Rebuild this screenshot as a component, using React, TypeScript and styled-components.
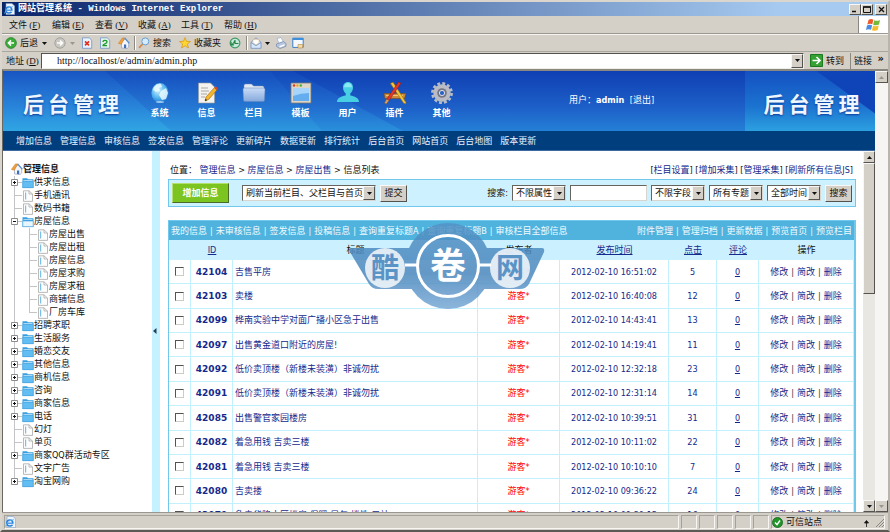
import React from "react";
import styled, { createGlobalStyle, css } from "styled-components";

const sans = `"DejaVu Sans Condensed", "DejaVu Sans", "Noto Sans CJK SC", sans-serif`;
const menuFont = `"Liberation Serif", "Noto Sans CJK SC", serif`;
const navy = "#14298c";
const face = "#d4d0c8";

const Global = createGlobalStyle`
  * { box-sizing: border-box; }
  html, body { margin: 0; height: 100%; overflow: hidden; }
  #root { height: 100%; }
  body { font: 9px/12px ${sans}; color: #111; background: ${face}; }
  button, input, select { font: inherit; color: inherit; margin: 0; padding: 0; border-radius: 0; }
  a { color: inherit; text-decoration: none; }
  svg { display: block; flex: none; }
`;

const raised = css`
  background: ${face};
  border: 1px solid;
  border-color: #f8f7f4 #55534f #55534f #f8f7f4;
`;

const Window = styled.div`
  height: 100vh;
  display: flex;
  flex-direction: column;
  border: 2px solid #dad6ce;
  border-right-color: #b9b5ad;
  border-bottom-color: #5c5a55;
`;
const TitleBar = styled.header`
  height: 14px;
  flex: none;
  display: flex;
  align-items: center;
  gap: 3px;
  padding: 0 1px 0 2px;
  color: #fff;
  background: linear-gradient(90deg, #0a246a, #a6caf0 88%);
  h1 {
    flex: 1;
    margin: 0;
    font: bold 9px/14px "Liberation Mono", "Noto Sans CJK SC", monospace;
  }
`;
const CaptionButtons = styled.div`
  display: flex;
`;
const CaptionButton = styled.button<{ $apart?: boolean }>`
  ${raised}
  width: 12px;
  height: 11px;
  margin-left: ${(p) => (p.$apart ? 2 : 0)}px;
  display: grid;
  place-items: center;
`;
const MenuBar = styled.nav`
  height: 18px;
  flex: none;
  display: flex;
  align-items: stretch;
  padding-left: 7px;
  border-bottom: 1px solid #9b9891;
  font: 9px/18px ${menuFont};
`;
const MenuItem = styled.button`
  width: 43px;
  border: 0;
  background: none;
  text-align: left;
  white-space: nowrap;
`;
const Flag = styled.div`
  width: 30px;
  margin-left: auto;
  display: grid;
  place-items: center;
  background: #fff;
  border-left: 1px solid #8a8780;
`;
const ToolBar = styled.div`
  height: 18px;
  flex: none;
  display: flex;
  align-items: center;
  padding-left: 3px;
  border-top: 1px solid #f6f4f0;
  border-bottom: 1px solid #aaa79f;
`;
const ToolButton = styled.button<{ $w: number }>`
  width: ${(p) => p.$w}px;
  height: 16px;
  border: 0;
  background: none;
  display: flex;
  align-items: center;
  gap: 3px;
  white-space: nowrap;
`;
const Divider = styled.span`
  width: 2px;
  height: 14px;
  margin-right: 2px;
  border-left: 1px solid #8c8982;
  border-right: 1px solid #fff;
`;
const AddressBar = styled.form`
  height: 17px;
  flex: none;
  display: flex;
  align-items: center;
  padding-left: 4px;
  label { width: 35px; font: 9px/16px ${menuFont}; }
`;
const AddressField = styled.div`
  flex: 1;
  height: 16px;
  display: flex;
  background: #fff;
  border: 1px solid;
  border-color: #55534f #efede8 #efede8 #55534f;
  input {
    flex: 1;
    min-width: 0;
    border: 0;
    outline: 0;
    padding-left: 15px;
    font: 10px/14px "Liberation Serif", serif;
  }
`;
const ArrowButton = styled.button`
  ${raised}
  width: 12px;
  display: grid;
  place-items: center;
`;
const GoButton = styled.button`
  height: 15px;
  width: 46px;
  padding-left: 6px;
  border: 0;
  background: none;
  display: flex;
  align-items: center;
  gap: 3px;
  white-space: nowrap;
`;
const LinksButton = styled.button`
  width: 38px;
  height: 16px;
  padding: 0 4px 0 3px;
  border: 0;
  border-left: 1px solid #8c8982;
  background: none;
  display: flex;
  justify-content: space-between;
  align-items: center;
  b { align-self: start; font-size: 11px; }
`;

const Viewport = styled.div`
  flex: 1;
  min-height: 0;
  display: flex;
  border-top: 2px solid #8b897f;
  border-left: 1px solid #6b6964;
`;
const Page = styled.div`
  flex: 1;
  min-width: 0;
  display: flex;
  flex-direction: column;
  background: #fff;
`;
const ScrollTrack = styled.div<{ $w: number; $idle?: boolean }>`
  width: ${(p) => p.$w}px;
  flex: none;
  display: flex;
  flex-direction: column;
  background: ${(p) => (p.$idle ? "#f6f5f3" : "#e9e7e2")};
`;
const ScrollButton = styled.button`
  ${raised}
  height: 12px;
  flex: none;
  display: grid;
  place-items: center;
`;
const Thumb = styled.div`
  ${raised}
  height: 131px;
`;
const Spring = styled.div`
  flex: 1;
`;

const Banner = styled.div`
  position: relative;
  height: 60px;
  flex: none;
  display: flex;
  color: #fff;
  background: linear-gradient(#0f3fb3, #1d5fc8 60%, #2480d6);
`;
const Rays = styled.svg`
  position: absolute;
  left: 0;
  top: 0;
`;
const BrandBox = styled.div<{ $panel?: boolean }>`
  position: relative;
  width: ${(p) => (p.$panel ? 130 : 133)}px;
  padding-top: 4px;
  padding-left: 3px;
  display: flex;
  justify-content: center;
  align-items: center;
  gap: 4px;
  font: bold 21px/28px "Noto Sans CJK SC", sans-serif;
  color: #eef7ff;
  text-shadow: 0 1px 2px #0a3c9c;
  background: ${(p) =>
    p.$panel
      ? "linear-gradient(216deg, #0f43b8 27%, transparent 28%), linear-gradient(#1450c2, #1c74d0 60%, #2ca0e0)"
      : "none"};
`;
const Modules = styled.nav`
  position: relative;
  display: flex;
  flex: 1;
`;
const Module = styled.a`
  width: 47px;
  padding-top: 10px;
  display: flex;
  flex-direction: column;
  align-items: center;
  gap: 2px;
  font-weight: bold;
`;
const UserBox = styled.div`
  position: relative;
  width: 176px;
  padding-top: 23px;
  b { margin-right: 3px; }
`;
const SubNav = styled.nav`
  height: 19px;
  flex: none;
  display: flex;
  align-items: center;
  gap: 8px;
  padding-left: 13px;
  color: #e8f2fc;
  background: #003e7e;
  white-space: nowrap;
`;
const Frames = styled.div`
  flex: 1;
  min-height: 0;
  display: flex;
  border-top: 1px solid #3c6aa0;
`;
const Side = styled.aside`
  width: 149px;
  flex: none;
  padding: 11px 0 0 8px;
  overflow: hidden;
`;
const RootNode = styled.div`
  height: 14px;
  display: flex;
  align-items: center;
  font-weight: bold;
`;
const Tree = styled.ul<{ $nested?: boolean }>`
  list-style: none;
  margin: 0;
  padding: 0;
  margin-left: ${(p) => (p.$nested ? 15 : 0)}px;
`;
const Node = styled.li<{ $last?: boolean }>`
  background: linear-gradient(#c4c4c4, #c4c4c4) 3px 0 / 1px ${(p) => (p.$last ? "7px" : "100%")} no-repeat;
`;
const NodeRow = styled.a`
  height: 13px;
  display: flex;
  align-items: center;
  line-height: 13px;
  white-space: nowrap;
`;
const Twig = styled.span`
  width: 11px;
  height: 13px;
  flex: none;
  display: flex;
  align-items: center;
  background: linear-gradient(#c4c4c4, #c4c4c4) 4px 6px / 7px 1px no-repeat;
`;
const Splitter = styled.button`
  width: 8px;
  flex: none;
  border: 0;
  background: #c6f1ff;
  display: flex;
  align-items: center;
`;
const Main = styled.main`
  position: relative;
  flex: 1;
  min-width: 0;
  padding: 13px 7px 0 8px;
  overflow: hidden;
`;
const Crumbs = styled.div`
  height: 15px;
  display: flex;
  justify-content: space-between;
  padding: 0 3px 0 2px;
  white-space: nowrap;
  a { color: ${navy}; }
`;
const Controls = styled.form`
  height: 28px;
  display: flex;
  align-items: center;
  gap: 4px;
  padding: 0 3px;
  background: #cdf1ff;
  border: 1px solid #72c8ec;
  white-space: nowrap;
`;
const AddButton = styled.button`
  width: 57px;
  height: 20px;
  margin-right: 9px;
  color: #fff;
  font-weight: bold;
  background: #7cc41f;
  border: 1px solid;
  border-color: #b4e070 #4a6a2a #4a6a2a #b4e070;
`;
const GreyButton = styled.button`
  ${raised}
  width: 27px;
  height: 17px;
  line-height: 13px;
`;
const SelectBox = styled.span<{ $w: number }>`
  width: ${(p) => p.$w}px;
  height: 16px;
  display: grid;
  background: #fff;
  border: 1px solid;
  border-color: #66645f #d8d5ce #d8d5ce #66645f;
  select {
    grid-area: 1 / 1;
    width: 100%;
    appearance: none;
    border: 0;
    background: none;
    padding: 0 12px 0 3px;
    outline: 0;
  }
`;
const SelectArrow = styled.span`
  ${raised}
  grid-area: 1 / 1;
  justify-self: end;
  width: 12px;
  display: grid;
  place-items: center;
  pointer-events: none;
`;
const SearchLabel = styled.label`
  margin-left: auto;
`;
const SearchInput = styled.input`
  width: 77px;
  height: 16px;
  background: #fff;
  border: 1px solid;
  border-color: #66645f #d8d5ce #d8d5ce #66645f;
`;
const ListBox = styled.section`
  margin-top: 13px;
  border: 1px solid #72c8ec;
  border-width: 1px 2px 1px 1px;
`;
const ListBar = styled.div`
  height: 19px;
  display: flex;
  justify-content: space-between;
  align-items: center;
  padding: 0 2px;
  color: #f2fbff;
  background: #4fb3de;
  white-space: nowrap;
`;
const Sep = styled.span`
  margin: 0 3px;
`;
const Grid = styled.table`
  width: 100%;
  height: 288px;
  table-layout: fixed;
  border-collapse: separate;
  border-spacing: 0;
  color: ${navy};
  th {
    height: 20px;
    padding: 0;
    font-weight: normal;
    background: #cbf0ff;
  }
  th a { text-decoration: underline; }
  td {
    padding: 0;
    text-align: center;
    white-space: nowrap;
    border-bottom: 1px solid #c2f0fc;
    border-right: 1px solid #c2f0fc;
  }
`;
const PlainHead = styled.th`
  color: #111;
`;
const IdCell = styled.td`
  font: bold 9px/12px "DejaVu Sans", sans-serif;
`;
const TitleCell = styled.td`
  && { text-align: left; padding-left: 2px; }
`;
const Guest = styled.td`
  color: #ff0000;
`;
const Ops = styled.td`
  i { font-style: normal; color: #333; margin: 0 3px; }
`;
const Reply = styled.a`
  text-decoration: underline;
`;
const Check = styled.input`
  appearance: none;
  display: block;
  width: 9px;
  height: 9px;
  margin: 0 auto;
  background: #fff;
  border: 1px solid;
  border-color: #55534f #cfccc5 #cfccc5 #55534f;
`;
const Watermark = styled.svg`
  position: absolute;
  left: 186px;
  top: 69px;
  pointer-events: none;
`;
const StatusBar = styled.footer`
  height: 18px;
  flex: none;
  display: flex;
  align-items: stretch;
  padding: 2px 1px 1px 2px;
  border-top: 1px solid #9b9891;
`;
const StatusCell = styled.div<{ $w?: number }>`
  ${(p) => (p.$w ? `width: ${p.$w}px;` : "flex: 1;")}
  margin-right: 2px;
  display: flex;
  align-items: center;
  gap: 3px;
  border: 1px solid;
  border-color: #a5a29b #f8f6f2 #f8f6f2 #a5a29b;
`;
const Grip = styled.span`
  margin-left: auto;
  display: flex;
  align-items: end;
  gap: 6px;
`;

const Tri = ({ up, grey }: { up?: boolean; grey?: boolean }) => (
  <svg width="5" height="3" viewBox="0 0 5 3">
    <path d={up ? "M0 3h5L2.5 0z" : "M0 0h5L2.5 3z"} fill={grey ? "#99968f" : "#111"} />
  </svg>
);

const IeIcon = () => (
  <svg width="11" height="12" viewBox="0 0 11 12">
    <path d="M2 .4h6l2.600 2.600v8.600H2z" fill="#eef4fb" stroke="#7f9cc4" strokeWidth=".6" />
    <circle cx="4.800" cy="7" r="3" fill="none" stroke="#2b83dc" strokeWidth="1.600" />
    <path d="M2.300 7.200h5.300" stroke="#2b83dc" strokeWidth="1.200" />
    <path d="M6.500 8.300h2.300" stroke="#eef4fb" strokeWidth="1" />
    <path d="M.5 10.500Q3 3.500 9 3.600" fill="none" stroke="#6bb6ee" strokeWidth=".8" />
  </svg>
);

const toolArt: Record<string, React.ReactNode> = {
  back: (
    <>
      <circle cx="6" cy="6" r="5.4" fill="#3dab3a" stroke="#1f7d22" strokeWidth=".7" />
      <path d="M9 6H3.6M6 3.4 3.4 6 6 8.6" stroke="#fff" strokeWidth="1.5" fill="none" />
    </>
  ),
  forward: (
    <>
      <circle cx="6" cy="6" r="5.2" fill="#c9c7c2" stroke="#9a9892" strokeWidth=".8" />
      <path d="M3 6h5.4M6 3.4 8.6 6 6 8.6" stroke="#fff" strokeWidth="1.4" fill="none" />
    </>
  ),
  stop: (
    <>
      <path d="M1.5.8h6.7l2.5 2.4v8.1H1.5z" fill="#eaf3fd" stroke="#6e93c8" strokeWidth=".8" />
      <path d="m4 4.4 4 4M8 4.4l-4 4" stroke="#e0301e" strokeWidth="1.6" />
    </>
  ),
  refresh: (
    <>
      <path d="M1.5.8h6.7l2.5 2.4v8.1H1.5z" fill="#e4f3e9" stroke="#6e93c8" strokeWidth=".8" />
      <path d="M4 5q0-1.6 2-1.6T8 5q0 1-2 1.8T4 8.6h4" stroke="#1f9a2c" strokeWidth="1.3" fill="none" />
    </>
  ),
  home: (
    <>
      <path d="M3.500 5.500v5.400l5.500.7 1.700-1.600V5.500L7 2z" fill="#f3f6fb" stroke="#8294b4" strokeWidth=".6" />
      <path d="M.4 6.400 4.400.900h2.200L3.400 7.200z" fill="#f0a03c" stroke="#cf7416" strokeWidth=".5" />
      <path d="m6.600.9 4.700 5.400" stroke="#5a8fd0" strokeWidth="1.300" />
      <path d="M6 7.500h2.200v3.800L6 11z" fill="#3f6fb8" />
    </>
  ),
  search: (
    <>
      <circle cx="7.3" cy="4.4" r="3.5" fill="#d4ecfb" stroke="#6b9fd2" strokeWidth="1" />
      <path d="m4.6 7-3.5 3.9" stroke="#d08a4c" strokeWidth="1.7" />
    </>
  ),
  star: (
    <path
      d="m6 .6 1.5 3.7 4 .2-3.1 2.5 1.1 4L6 8.8 2.5 11l1.1-4L.5 4.5l4-.2z"
      fill="#ffd52e"
      stroke="#d79312"
      strokeWidth=".7"
    />
  ),
  history: (
    <>
      <circle cx="6" cy="6" r="4.9" fill="#c8e8dd" stroke="#3d9a63" strokeWidth="1.1" />
      <path d="M2 4.800v3h3M2.500 7.500Q5 6.500 6 3.500M6 3v3.500h3.500" stroke="#278544" strokeWidth="1.200" fill="none" />
    </>
  ),
  mail: (
    <>
      <path d="M1 5.3 6 .8l5 4.5v6H1z" fill="#d7e7f9" stroke="#6d90c4" strokeWidth=".8" />
      <path d="M3 2.6h6v3.2L6 8 3 5.8z" fill="#fff" stroke="#e1ab72" strokeWidth=".5" />
      <path d="m1 5.5 5 3.2 5-3.2" fill="none" stroke="#6d90c4" strokeWidth=".8" />
    </>
  ),
  print: (
    <>
      <path d="m2 1.500 4-1L8.500 5 4 6.500z" fill="#fff" stroke="#88a3cc" strokeWidth=".6" />
      <path d="m1.500 7 7-2.500 2.500 2v2.800L5 11.500 1.500 9.500z" fill="#b9c6de" stroke="#7387ad" strokeWidth=".7" />
      <path d="m4.500 9 5-1.800v1.500l-5 1.800z" fill="#fff" />
    </>
  ),
  edit: (
    <>
      <path d="M.8 1.2h10.4v9.200H.8z" fill="#f3f9ff" stroke="#3c7fc8" strokeWidth="1" />
      <path d="M.8 1h10.4v2H.8z" fill="#3c8fdc" />
      <path d="M6 7.500h4.500v3.500H6z" fill="#f6d9a2" stroke="#b28a4c" strokeWidth=".6" />
    </>
  ),
};
const ToolIcon = ({ name }: { name: string }) => (
  <svg width="12" height="12" viewBox="0 0 12 12">
    {toolArt[name]}
  </svg>
);

const moduleArt: Record<string, React.ReactNode> = {
  系统: (
    <>
      <defs>
        <radialGradient id="globe" cx=".4" cy=".35" r=".7">
          <stop offset="0" stopColor="#d8f4ff" />
          <stop offset=".55" stopColor="#59b8f0" />
          <stop offset="1" stopColor="#1a6ed0" />
        </radialGradient>
      </defs>
      <ellipse cx="12" cy="12" rx="8.6" ry="10" fill="url(#globe)" />
      <path d="M6 6q3-4 7-3l1 3-3 1 1 3-4 1-3-2zM13 10l5-3 2 5-2 6-4 1-3-5z" fill="#e9faff" opacity=".85" />
      <ellipse cx="12" cy="21" rx="4" ry="1" fill="#dff6ff" opacity=".6" />
    </>
  ),
  信息: (
    <>
      <path d="M3.5 2h12l4 4v16h-16z" fill="#f3f2ef" stroke="#9b9b9b" strokeWidth=".6" />
      <path d="M6 7h7M6 10h8M6 13h6M6 16h4" stroke="#a9a9a9" strokeWidth="1" />
      <path d="m10 20 1-4 8.3-9.3 2.6 2.3-8.2 9.4z" fill="#f3b62c" stroke="#a8630e" strokeWidth=".6" />
      <path d="m19.3 6.7 1.3-1.4 2.5 2.3L21.900 9z" fill="#d9472c" />
      <path d="m10 20 .6-2.300 1.600 1.500z" fill="#222" />
    </>
  ),
  栏目: (
    <>
      <defs>
        <linearGradient id="folder" x2="0" y2="1">
          <stop offset="0" stopColor="#c9dcf7" />
          <stop offset="1" stopColor="#86a9dc" />
        </linearGradient>
      </defs>
      <path d="M2 4.500q0-1.500 1.500-1.500h6l2 2h9q1.500 0 1.500 1.500V12H2z" fill="#e1e9f4" stroke="#6f86b0" strokeWidth=".5" />
      <path d="M1 8.500q0-1.500 1.500-1.500h19q1.500 0 1.500 1.500L22.500 19q0 1.500-1.500 1.500H3Q1.500 20.500 1.500 19z" fill="url(#folder)" stroke="#6484bb" strokeWidth=".5" />
    </>
  ),
  模板: (
    <>
      <path d="M2 2h20v20H2z" fill="#ddd6c8" stroke="#7d776c" strokeWidth=".8" />
      <path d="M4 7h16v13H4z" fill="#64aef0" />
      <path d="M4 7h16v5Q12 12 4 15z" fill="#a6d4fa" />
      <circle cx="5" cy="4.500" r="1.200" fill="#e03a2c" />
      <circle cx="8.400" cy="4.500" r="1.200" fill="#f0a822" />
      <circle cx="11.800" cy="4.500" r="1.200" fill="#48b039" />
    </>
  ),
  用户: (
    <>
      <path d="M12 1c3 0 5 2.300 5 5.500 0 2.500-1 4.500-2.700 5.700v2.300c4 .9 8.700 2.300 8.700 6.500H1c0-4.200 4.700-5.600 8.700-6.500v-2.300C8 11 7 9 7 6.500 7 3.300 9 1 12 1z" fill="#49cfe4" />
      <path d="M12 2c2.300 0 4 1.700 4 4.300H8C8 3.700 9.700 2 12 2z" fill="#8ce8f2" />
    </>
  ),
  插件: (
    <>
      <path d="M1 12.500h22l-1.500 5H2z" fill="#c98a3c" stroke="#7a4a14" strokeWidth=".6" />
      <path d="M3 14.500h17" stroke="#f0c27a" strokeWidth="1" />
      <path d="m7.500 2.500 2.600-1.300L23 21.500l-.5 1.300-1.800-.6z" fill="#f4c63a" stroke="#a46d10" strokeWidth=".6" />
      <path d="m15.500 1 2.500 1.300L6 19.500l-2.300-1.400z" fill="#e2382b" stroke="#8a1a12" strokeWidth=".5" />
      <path d="m3.700 18.100 2.300 1.400-2.600 3.500-2-1z" fill="#d8a060" stroke="#7a4a14" strokeWidth=".4" />
    </>
  ),
  其他: (
    <>
      <circle cx="12" cy="12" r="9.600" fill="none" stroke="#b9bcc4" strokeWidth="2.600" strokeDasharray="2.900 2.127" />
      <circle cx="12" cy="12" r="6.200" fill="none" stroke="#b9bcc4" strokeWidth="5" />
      <circle cx="12" cy="12" r="4.800" fill="#747884" />
      <circle cx="12" cy="12" r="2.600" fill="#2a63c6" stroke="#dcdfe6" strokeWidth="1" />
    </>
  ),
};

const FolderIcon = ({ open }: { open?: boolean }) => (
  <svg width="12" height="12" viewBox="0 0 12 12">
    <path d="M.5 1.200h4.500l1 1h5.500v8.800H.5z" fill="#3a9fe0" />
    <path d={open ? "M.8 5h10.400v5.700H.8z" : "M.8 4.200h10.400v6.500H.8z"} fill={open ? "#e8f5fd" : "#62bdf2"} stroke="#49a5df" strokeWidth=".6" />
    <path d="M1.500 3.500h9" stroke="#c6e9fb" strokeWidth=".8" />
  </svg>
);
const LeafIcon = () => (
  <svg width="12" height="12" viewBox="0 0 12 12">
    <path d="M1.500.800h5.500L10.500 4v7.400h-9z" fill="#fdfdfd" stroke="#a9a9a9" strokeWidth=".8" />
    <path d="M3.600 2.500v7" stroke="#79bfe8" strokeWidth="1.200" />
    <path d="M7 .8V4h3.500" fill="none" stroke="#a9a9a9" strokeWidth=".8" />
  </svg>
);
const Toggle = ({ open }: { open?: boolean }) => (
  <svg width="7" height="7" viewBox="0 0 7 7">
    <path d="M.5.500h6v6h-6z" fill="#fff" stroke="#8c8c8c" />
    <path d={open ? "M2 3.500h3" : "M2 3.500h3M3.500 2v3"} stroke="#111" />
  </svg>
);

type TreeItem = { name: string; kind: "folder" | "leaf"; children?: TreeItem[] };
const leaf = (name: string): TreeItem => ({ name, kind: "leaf" });
const folder = (name: string, children?: TreeItem[]): TreeItem => ({ name, kind: "folder", children });

const tree: TreeItem[] = [
  folder("供求信息"),
  leaf("手机通讯"),
  leaf("数码书籍"),
  folder("房屋信息", ["房屋出售", "房屋出租", "房屋信息", "房屋求购", "房屋求租", "商铺信息", "厂房车库"].map(leaf)),
  ...["招聘求职", "生活服务", "婚恋交友", "其他信息", "商机信息", "咨询", "商家信息", "电话"].map((n) => folder(n)),
  leaf("幻灯"),
  leaf("单页"),
  folder("商家QQ群活动专区"),
  leaf("文字广告"),
  folder("淘宝网购"),
];

const TreeList = ({ items, nested }: { items: TreeItem[]; nested?: boolean }) => (
  <Tree $nested={nested}>
    {items.map((item, i) => (
      <Node key={item.name} $last={i === items.length - 1}>
        <NodeRow href="#">
          <Twig>{item.kind === "folder" && <Toggle open={!!item.children} />}</Twig>
          {item.kind === "folder" ? <FolderIcon open={!!item.children} /> : <LeafIcon />}
          {item.name}
        </NodeRow>
        {item.children && <TreeList items={item.children} nested />}
      </Node>
    ))}
  </Tree>
);

const Select = ({ label, w }: { label: string; w: number }) => (
  <SelectBox $w={w}>
    <select aria-label={label}>
      <option>{label}</option>
    </select>
    <SelectArrow>
      <Tri />
    </SelectArrow>
  </SelectBox>
);

const LinkStrip = ({ items }: { items: string[] }) => (
  <div>
    {items.map((t, i) => (
      <React.Fragment key={t}>
        {i > 0 && <Sep>|</Sep>}
        <a href="#">{t}</a>
      </React.Fragment>
    ))}
  </div>
);

const Brand = ({ panel }: { panel?: boolean }) => (
  <BrandBox $panel={panel}>
    {[..."后台管理"].map((c) => (
      <span key={c}>{c}</span>
    ))}
  </BrandBox>
);

const menus = [["文件", "F"], ["编辑", "E"], ["查看", "V"], ["收藏", "A"], ["工具", "T"], ["帮助", "H"]];
const subNav = ["增加信息", "管理信息", "审核信息", "签发信息", "管理评论", "更新碎片", "数据更新", "排行统计", "后台首页", "网站首页", "后台地图", "版本更新"];
const rows: [string, string, string, number][] = [
  ["42104", "吉售平房", "16:51:02", 5],
  ["42103", "卖楼", "16:40:08", 12],
  ["42099", "桦南实验中学对面广播小区急于出售", "14:43:41", 13],
  ["42097", "出售黄金道口附近的房屋!", "14:19:41", 11],
  ["42092", "低价卖顶楼（新楼未装潢）非诚勿扰", "12:32:18", 23],
  ["42091", "低价卖顶楼（新楼未装潢）非诚勿扰", "12:31:14", 14],
  ["42085", "出售警官家园楼房", "10:39:51", 31],
  ["42082", "着急用钱 吉卖三楼", "10:11:02", 22],
  ["42081", "着急用钱 吉卖三楼", "10:10:10", 7],
  ["42080", "吉卖搂", "09:36:22", 24],
  ["42079", "急卖华隆小区楼房 保暖 另包 楼性 二站", "09:30:15", 16],
];

export default function App() {
  return (
    <Window>
      <Global />
      <TitleBar>
        <IeIcon />
        <h1>网站管理系统 - Windows Internet Explorer</h1>
        <CaptionButtons>
          <CaptionButton aria-label="最小化">
            <svg width="8" height="7"><path d="M1 5.500h4" stroke="#111" strokeWidth="1.500" /></svg>
          </CaptionButton>
          <CaptionButton aria-label="最大化">
            <svg width="8" height="7"><path d="M.5 1h7v5.500h-7z" fill="none" stroke="#111" /><path d="M0 1h8" stroke="#111" strokeWidth="1.500" /></svg>
          </CaptionButton>
          <CaptionButton aria-label="关闭" $apart>
            <svg width="7" height="7"><path d="m1 1 5 5M6 1 1 6" stroke="#111" strokeWidth="1.300" /></svg>
          </CaptionButton>
        </CaptionButtons>
      </TitleBar>
      <MenuBar>
        {menus.map(([t, k]) => (
          <MenuItem key={k}>
            {t} (<u>{k}</u>)
          </MenuItem>
        ))}
        <Flag>
          <svg width="15" height="14" viewBox="0 0 15 14">
            <path d="M2.500 2Q5 .300 7.300 1.800L6.300 6.300Q4 5 1.300 6.500z" fill="#ee5a2c" />
            <path d="M8.200 2.200Q11 3.600 14 2L13 6.500Q10 8 7.200 6.700z" fill="#74b83c" />
            <path d="M1 7.500Q3.600 6 6.100 7.300L5.100 11.800Q2.600 10.500 0 12z" fill="#4a8be0" />
            <path d="M7 7.700Q9.800 9 12.700 7.500L11.700 12Q9 13.500 6 12.200z" fill="#f7bd2a" />
          </svg>
        </Flag>
      </MenuBar>
      <ToolBar>
        <ToolButton $w={37}><ToolIcon name="back" />后退</ToolButton>
        <ToolButton $w={12} aria-label="后退历史"><Tri /></ToolButton>
        <ToolButton $w={16} aria-label="前进"><ToolIcon name="forward" /></ToolButton>
        <ToolButton $w={11} aria-label="前进历史"><Tri grey /></ToolButton>
        <ToolButton $w={18} aria-label="停止"><ToolIcon name="stop" /></ToolButton>
        <ToolButton $w={19} aria-label="刷新"><ToolIcon name="refresh" /></ToolButton>
        <ToolButton $w={16} aria-label="主页"><ToolIcon name="home" /></ToolButton>
        <Divider />
        <ToolButton $w={41}><ToolIcon name="search" />搜索</ToolButton>
        <ToolButton $w={50}><ToolIcon name="star" />收藏夹</ToolButton>
        <ToolButton $w={17} aria-label="历史"><ToolIcon name="history" /></ToolButton>
        <Divider />
        <ToolButton $w={25} aria-label="邮件"><ToolIcon name="mail" /><Tri /></ToolButton>
        <ToolButton $w={17} aria-label="打印"><ToolIcon name="print" /></ToolButton>
        <ToolButton $w={16} aria-label="编辑"><ToolIcon name="edit" /></ToolButton>
      </ToolBar>
      <AddressBar onSubmit={(e) => e.preventDefault()}>
        <label htmlFor="addr">地址 (<u>D</u>)</label>
        <AddressField>
          <input id="addr" defaultValue="http://localhost/e/admin/admin.php" />
          <ArrowButton type="button" aria-label="地址列表"><Tri /></ArrowButton>
        </AddressField>
        <GoButton>
          <svg width="13" height="13" viewBox="0 0 13 13">
            <path d="M.5.500h12v12H.5z" fill="#34a132" stroke="#1d7a20" />
            <path d="M2.500 6.500h7M6.500 3l3.500 3.500L6.500 10" fill="none" stroke="#fff" strokeWidth="1.600" />
          </svg>
          转到
        </GoButton>
        <LinksButton type="button"><span>链接</span><b>»</b></LinksButton>
      </AddressBar>

      <Viewport>
        <Page>
          <Banner>
            <Rays width="400" height="60" viewBox="0 0 400 60">
              <defs>
                <linearGradient id="ray" x2="0" y2="1">
                  <stop offset="0" stopColor="#2a7fe0" stopOpacity=".25" />
                  <stop offset="1" stopColor="#35b4e8" stopOpacity=".6" />
                </linearGradient>
              </defs>
              <path d="M0 0h102l66 60H0z" fill="url(#ray)" />
              <path d="M102 0h165l52 60H168z" fill="url(#ray)" opacity=".4" />
              <path d="M0 0h290l110 60H0z" fill="url(#ray)" opacity=".5" />
            </Rays>
            <Brand />
            <Modules>
              {Object.keys(moduleArt).map((m) => (
                <Module key={m} href="#">
                  <svg width="24" height="24" viewBox="0 0 24 24">{moduleArt[m]}</svg>
                  {m}
                </Module>
              ))}
            </Modules>
            <UserBox>
              用户：<b>admin</b> <a href="#">[退出]</a>
            </UserBox>
            <Brand panel />
          </Banner>
          <SubNav>
            {subNav.map((t) => (
              <a key={t} href="#">{t}</a>
            ))}
          </SubNav>
          <Frames>
            <Side>
              <RootNode><ToolIcon name="home" />管理信息</RootNode>
              <TreeList items={tree} />
            </Side>
            <Splitter aria-label="收起">
              <svg width="5" height="7"><path d="M4.500 0v6L1 3z" fill="#23415c" /></svg>
            </Splitter>
            <Main>
              <Crumbs>
                <span>
                  位置： <a href="#">管理信息</a> &gt; <a href="#">房屋信息</a> &gt; <a href="#">房屋出售</a> &gt; 信息列表
                </span>
                <span>
                  [<a href="#">栏目设置</a>] [<a href="#">增加采集</a>] [<a href="#">管理采集</a>] [<a href="#">刷新所有信息JS</a>]
                </span>
              </Crumbs>
              <Controls onSubmit={(e) => e.preventDefault()}>
                <AddButton type="button">增加信息</AddButton>
                <Select label="刷新当前栏目、父栏目与首页" w={134} />
                <GreyButton>提交</GreyButton>
                <SearchLabel htmlFor="keyword">搜索:</SearchLabel>
                <Select label="不限属性" w={54} />
                <SearchInput id="keyword" />
                <Select label="不限字段" w={54} />
                <Select label="所有专题" w={54} />
                <Select label="全部时间" w={54} />
                <GreyButton>搜索</GreyButton>
              </Controls>
              <ListBox>
                <ListBar>
                  <LinkStrip items={["我的信息", "未审核信息", "签发信息", "投稿信息", "查询重复标题A", "查询重复标题B", "审核栏目全部信息"]} />
                  <LinkStrip items={["附件管理", "管理归档", "更新数据", "预览首页", "预览栏目"]} />
                </ListBar>
                <Grid>
                  <colgroup>
                    <col width="22" />
                    <col width="42" />
                    <col />
                    <col width="82" />
                    <col width="109" />
                    <col width="48" />
                    <col width="42" />
                    <col width="95" />
                  </colgroup>
                  <thead>
                    <tr>
                      <th />
                      <th><a href="#">ID</a></th>
                      <PlainHead>标题</PlainHead>
                      <PlainHead>发布者</PlainHead>
                      <th><a href="#">发布时间</a></th>
                      <th><a href="#">点击</a></th>
                      <th><a href="#">评论</a></th>
                      <PlainHead>操作</PlainHead>
                    </tr>
                  </thead>
                  <tbody>
                    {rows.map(([id, title, time, hits]) => (
                      <tr key={id}>
                        <td><Check type="checkbox" aria-label={id} /></td>
                        <IdCell>{id}</IdCell>
                        <TitleCell><a href="#">{title}</a></TitleCell>
                        <Guest>游客*</Guest>
                        <td>2012-02-10 {time}</td>
                        <td>{hits}</td>
                        <td><Reply href="#">0</Reply></td>
                        <Ops>
                          <a href="#">修改</a><i>|</i><a href="#">简改</a><i>|</i><a href="#">删除</a>
                        </Ops>
                      </tr>
                    ))}
                  </tbody>
                </Grid>
              </ListBox>
              <Watermark width="204" height="92" viewBox="0 0 204 92">
                <defs>
                  <linearGradient id="seal" gradientUnits="userSpaceOnUse" x1="0" y1="0" x2="0" y2="90">
                    <stop offset="0" stopColor="#5593c6" />
                    <stop offset=".6" stopColor="#4a88be" />
                    <stop offset="1" stopColor="#7aaad6" />
                  </linearGradient>
                </defs>
                <g fill="url(#seal)" opacity=".85">
                  <path d="M6 28h60l36 8 36-8h58q3 0 2 4l-15 32q-3 5-9 5H32q-6 0-9-5L4 32q-2-4 2-4z" />
                  <circle cx="102" cy="46" r="43" />
                </g>
                <path d="M59 45h14M132 45h13" stroke="#fff" strokeWidth="3" />
                <circle cx="102" cy="46" r="30.500" fill="none" stroke="#fff" strokeWidth="3" />
                <g fill="#fff" opacity=".8">
                  <circle cx="39" cy="48" r="20" />
                  <circle cx="164" cy="48" r="20" />
                </g>
                <g fontFamily="Noto Sans CJK SC, sans-serif" fontWeight="bold" textAnchor="middle">
                  <text x="39" y="58" fontSize="28" fill="#5a94c7">酷</text>
                  <text x="102" y="59" fontSize="36" fill="#fff">卷</text>
                  <text x="164" y="58" fontSize="28" fill="#5a94c7">网</text>
                </g>
              </Watermark>
            </Main>
            <ScrollTrack $w={12}>
              <ScrollButton aria-label="向上"><Tri up /></ScrollButton>
              <Thumb />
              <Spring />
              <ScrollButton aria-label="向下"><Tri /></ScrollButton>
            </ScrollTrack>
          </Frames>
        </Page>
        <ScrollTrack $w={13} $idle>
          <ScrollButton aria-label="页面向上"><Tri up grey /></ScrollButton>
          <Spring />
          <ScrollButton aria-label="页面向下"><Tri grey /></ScrollButton>
        </ScrollTrack>
      </Viewport>

      <StatusBar>
        <StatusCell><IeIcon /></StatusCell>
        {[0, 1, 2, 3, 4].map((i) => (
          <StatusCell key={i} $w={16} />
        ))}
        <StatusCell $w={114}>
          <svg width="11" height="11" viewBox="0 0 11 11">
            <circle cx="5.500" cy="5.500" r="5" fill="#22962b" stroke="#0f6217" strokeWidth=".8" />
            <path d="m3 5.500 2 2.200 3-4.200" fill="none" stroke="#fff" strokeWidth="1.400" />
          </svg>
          可信站点
          <Grip>
            <svg width="5" height="7"><path d="M2.500 7V2M.5 3l2-2.500 2 2.500z" stroke="#111" fill="#111" strokeWidth=".8" /></svg>
            <svg width="9" height="9"><path d="M1 9 9 1M4 9l5-5M7 9l2-2" stroke="#8a8780" /></svg>
          </Grip>
        </StatusCell>
      </StatusBar>
    </Window>
  );
}
